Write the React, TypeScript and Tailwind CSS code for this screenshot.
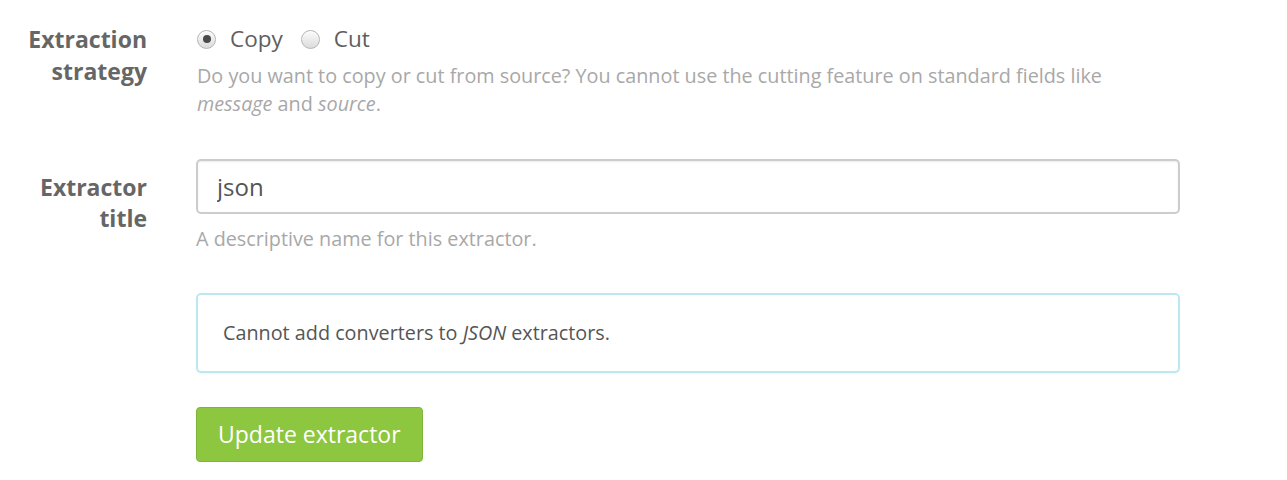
import React from "react";

const Radio = ({ checked, label }: { checked?: boolean; label: string }) => (
  <label className="flex items-center gap-[14px]">
    <span className="flex h-[19px] w-[19px] items-center justify-center rounded-full border border-[#b5b5b5] bg-gradient-to-b from-[#fbfbfb] to-[#dcdcdc] shadow-[inset_0_1px_1px_rgba(255,255,255,0.8)]">
      {checked && <span className="h-[8px] w-[8px] rounded-full bg-[#4a4a4a]" />}
    </span>
    <span className="text-[22.5px] text-[#5e5e5e]">{label}</span>
  </label>
);

const App = () => {
  return (
    <div
      className="min-h-[480px] bg-white pt-[23px]"
      style={{ fontFamily: '"Open Sans", "Liberation Sans", sans-serif' }}
    >
      {/* Extraction strategy */}
      <div className="flex">
        <div className="w-[147px] text-right text-[23px] font-bold leading-[32px] text-[#666]">
          Extraction
          <br />
          strategy
        </div>
        <div className="ml-[50px] w-[984px]">
          <div className="flex h-[32px] items-center gap-[18px]">
            <Radio checked label="Copy" />
            <Radio label="Cut" />
          </div>
          <p className="mt-[7px] text-[19.8px] leading-[28px] text-[#a8a8a8]">
            Do you want to copy or cut from source? You cannot use the cutting feature on standard fields like
            <br />
            <em>message</em> and <em>source</em>.
          </p>
        </div>
      </div>

      {/* Extractor title */}
      <div className="mt-[41px] flex">
        <div className="w-[147px] pt-[13px] text-right text-[23px] font-bold leading-[31px] text-[#666]">
          Extractor
          <br />
          title
        </div>
        <div className="ml-[49px] w-[984px]">
          <input
            defaultValue="json"
            className="h-[55px] w-full rounded-[5px] border-2 border-[#cccccc] px-[19px] text-[24px] text-[#555] shadow-[inset_0_1px_2px_rgba(0,0,0,0.08)] outline-none"
          />
          <p className="mt-[11px] text-[19.8px] leading-[28px] text-[#a8a8a8]">
            A descriptive name for this extractor.
          </p>
          <div className="mt-[40px] flex h-[80px] items-center rounded-[5px] border-2 border-[#bce8f1] px-[25px] text-[19.8px] text-[#555] shadow-[0_1px_2px_rgba(0,0,0,0.05)]">
            <span>
              Cannot add converters to <em>JSON</em> extractors.
            </span>
          </div>
          <button className="mt-[34px] h-[55px] rounded-[4px] border border-[#7db63a] bg-[#8dc63f] px-[21px] text-[23px] text-white">
            Update extractor
          </button>
        </div>
      </div>
    </div>
  );
};

export default App;
